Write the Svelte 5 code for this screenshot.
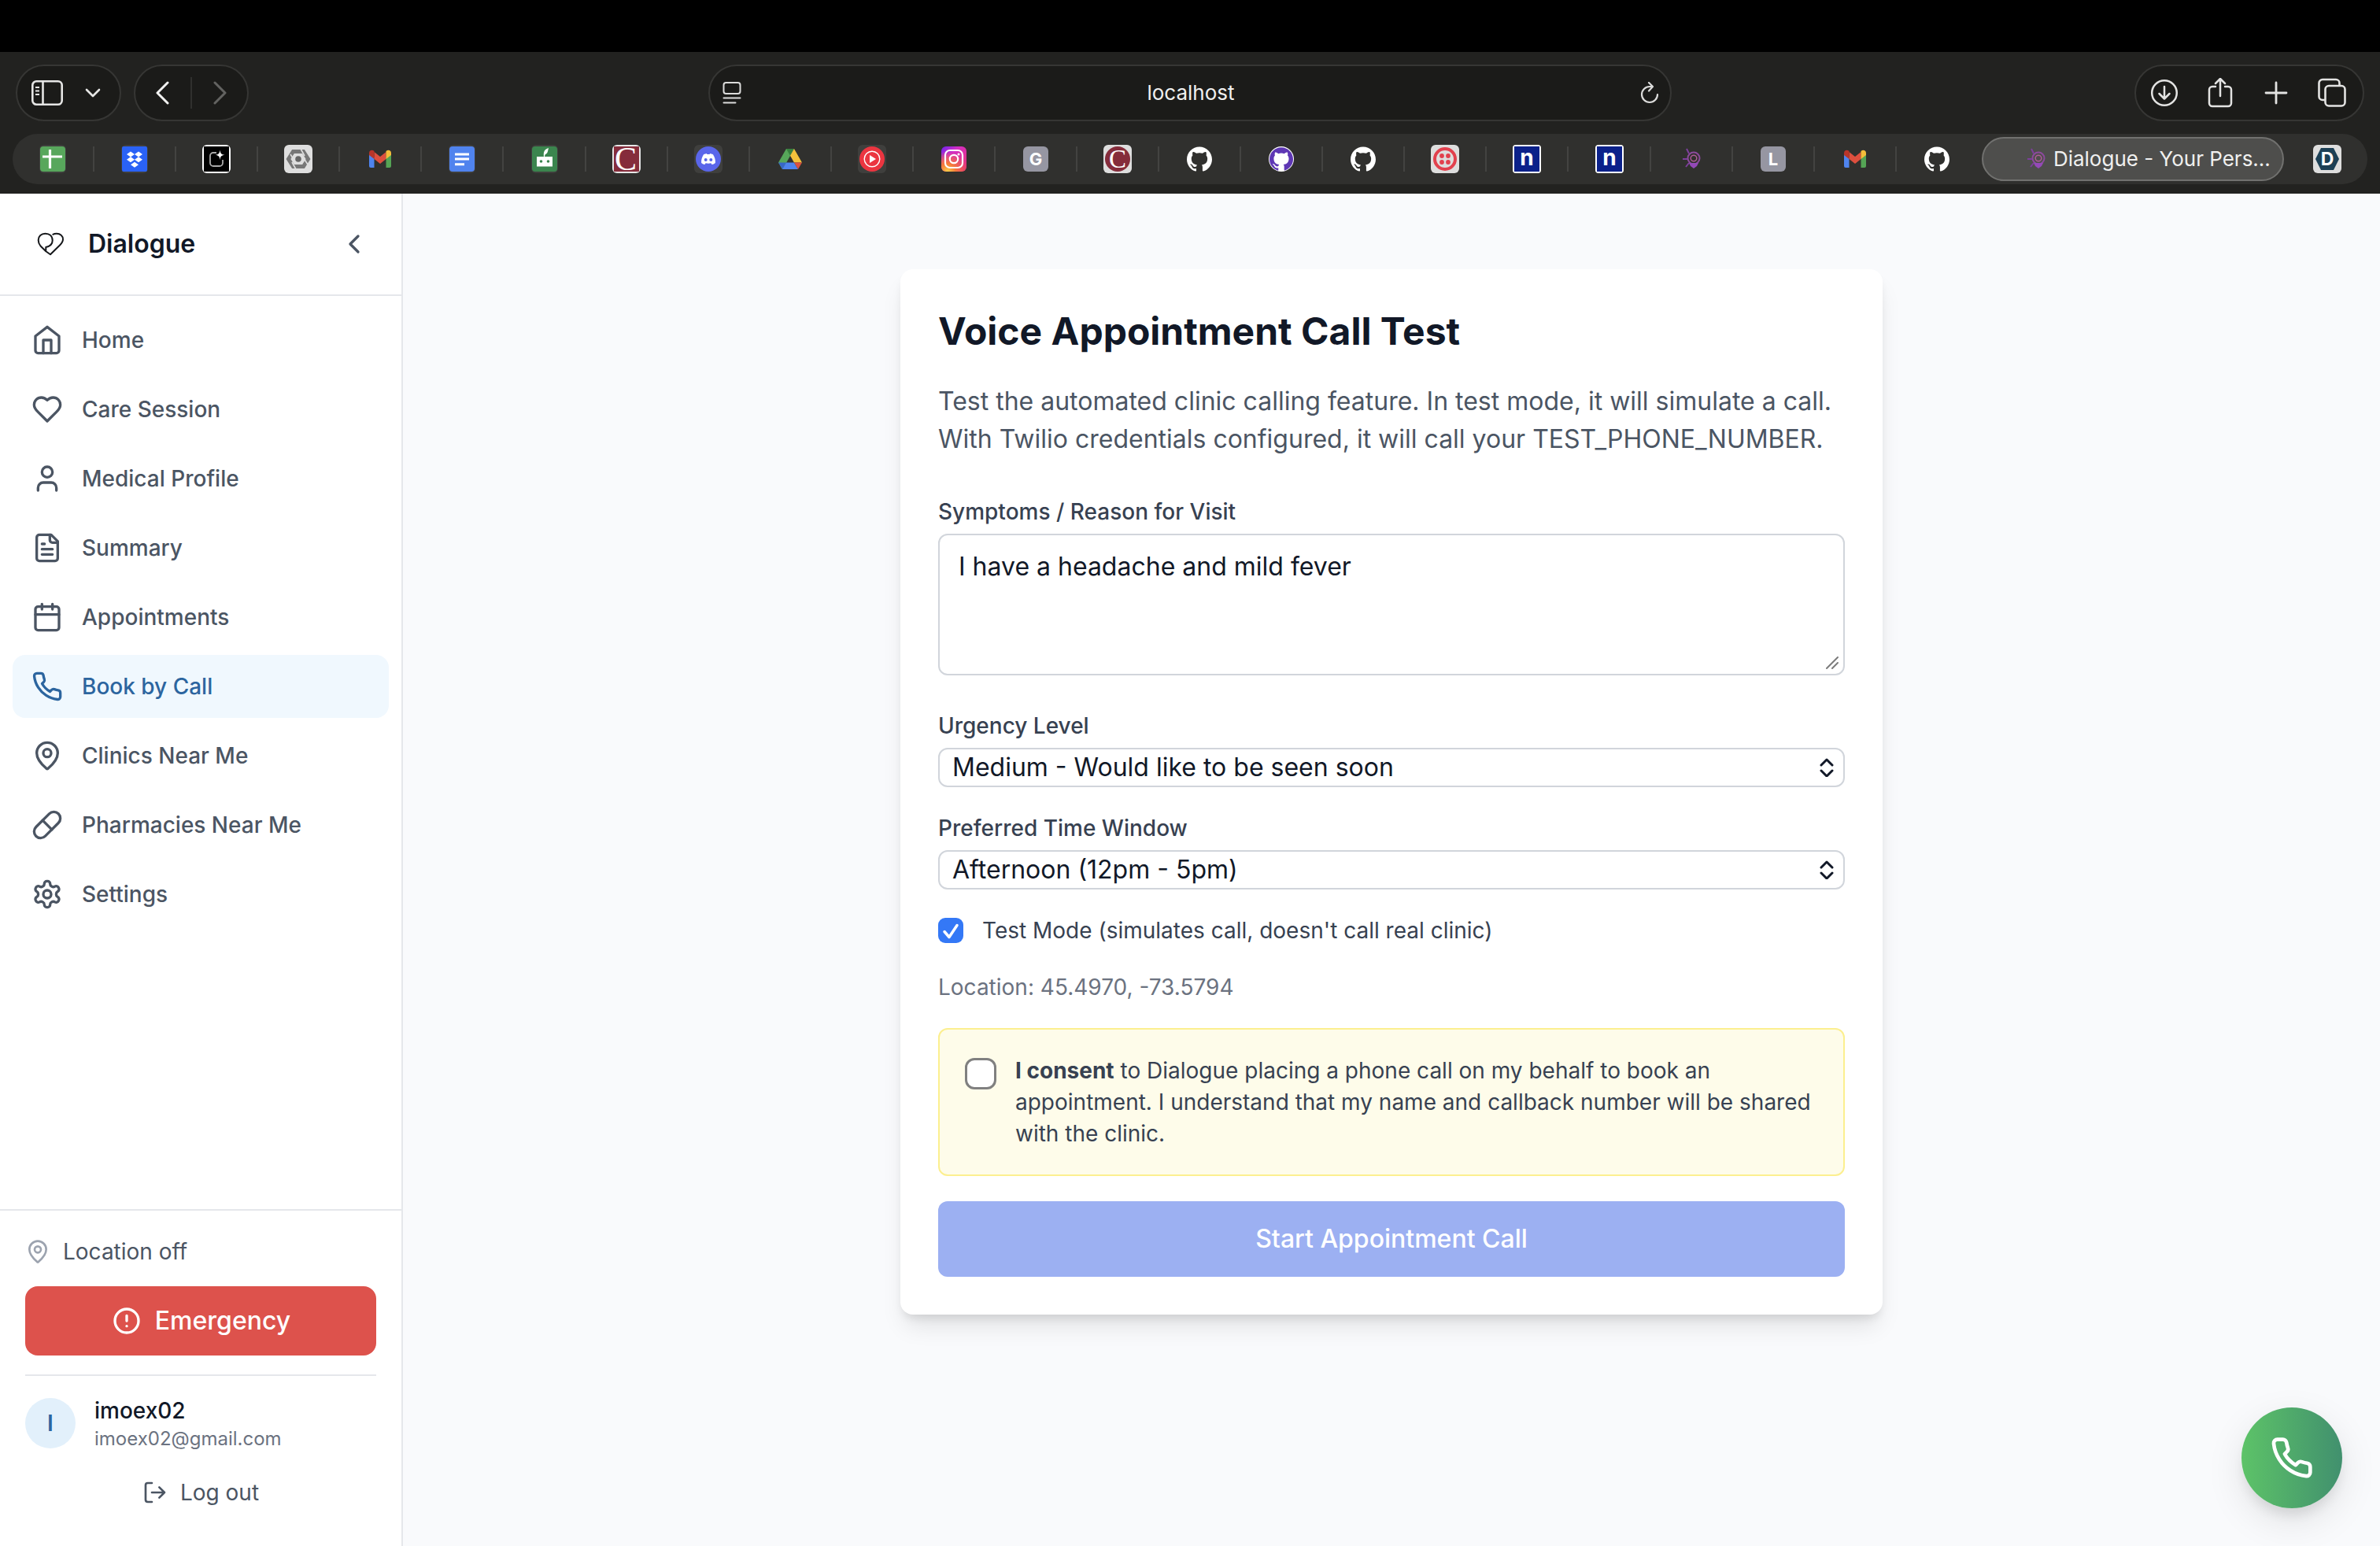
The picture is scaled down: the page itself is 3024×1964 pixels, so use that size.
<script lang="ts">
  type Tab = { kind: string; title: string; letter?: string };

  const tabs: Tab[] = [
    { kind: 'sheets', title: 'Sheets' },
    { kind: 'dropbox', title: 'Dropbox' },
    { kind: 'spark', title: 'Spark' },
    { kind: 'knot', title: 'Knot' },
    { kind: 'gmail', title: 'Gmail' },
    { kind: 'docs', title: 'Docs' },
    { kind: 'robot', title: 'Robot' },
    { kind: 'csquare', title: 'Carleton' },
    { kind: 'discord', title: 'Discord' },
    { kind: 'drive', title: 'Drive' },
    { kind: 'music', title: 'YouTube Music' },
    { kind: 'instagram', title: 'Instagram' },
    { kind: 'letter', title: 'G', letter: 'G' },
    { kind: 'cround', title: 'Carleton' },
    { kind: 'github', title: 'GitHub' },
    { kind: 'githubPurple', title: 'GitHub' },
    { kind: 'github', title: 'GitHub' },
    { kind: 'twilio', title: 'Twilio' },
    { kind: 'n', title: 'n' },
    { kind: 'n', title: 'n' },
    { kind: 'orbit', title: 'Dialogue' },
    { kind: 'letter', title: 'L', letter: 'L' },
    { kind: 'gmail', title: 'Gmail' },
    { kind: 'github', title: 'GitHub' }
  ];

  const nav = [
    { label: 'Home', icon: 'home' },
    { label: 'Care Session', icon: 'heart' },
    { label: 'Medical Profile', icon: 'user' },
    { label: 'Summary', icon: 'file' },
    { label: 'Appointments', icon: 'calendar' },
    { label: 'Book by Call', icon: 'phone', active: true },
    { label: 'Clinics Near Me', icon: 'pin' },
    { label: 'Pharmacies Near Me', icon: 'pill' },
    { label: 'Settings', icon: 'gear' }
  ];

  let symptoms = $state('I have a headache and mild fever');
  let urgency = $state('medium');
  let timeWindow = $state('afternoon');
  let testMode = $state(true);
  let consent = $state(false);

  const githubMark =
    'M12 .297c-6.63 0-12 5.373-12 12 0 5.303 3.438 9.8 8.205 11.385.6.113.82-.258.82-.577 0-.285-.01-1.04-.015-2.04-3.338.724-4.042-1.61-4.042-1.61C4.422 18.07 3.633 17.7 3.633 17.7c-1.087-.744.084-.729.084-.729 1.205.084 1.838 1.236 1.838 1.236 1.07 1.835 2.809 1.305 3.495.998.108-.776.417-1.305.76-1.605-2.665-.3-5.466-1.332-5.466-5.93 0-1.31.465-2.38 1.235-3.22-.135-.303-.54-1.523.105-3.176 0 0 1.005-.322 3.3 1.23.96-.267 1.98-.399 3-.405 1.02.006 2.04.138 3 .405 2.28-1.552 3.285-1.23 3.285-1.23.645 1.653.24 2.873.12 3.176.765.84 1.23 1.91 1.23 3.22 0 4.61-2.805 5.625-5.475 5.92.42.36.81 1.096.81 2.22 0 1.606-.015 2.896-.015 3.286 0 .315.21.69.825.57C20.565 22.092 24 17.592 24 12.297c0-6.627-5.373-12-12-12';
</script>

{#snippet favicon(kind: string, letter: string = '')}
  <svg class="favicon" viewBox="0 0 36 36" aria-hidden="true">
    {#if kind === 'sheets'}
      <rect x="1" y="0" width="34" height="36" rx="6" fill="#3f3f3d" />
      <rect x="2" y="2" width="32" height="32" rx="4" fill="#58a75c" />
      <path d="M14.500 6v24M5 15h25" stroke="#fff" stroke-width="3.200" />
    {:else if kind === 'dropbox'}
      <rect x="1" y="0" width="34" height="36" rx="6" fill="#3f3f3d" />
      <rect x="2" y="2" width="32" height="32" rx="2" fill="#2a62f6" />
      <path fill="#fff" d="M13 8.500l5 3.500-5 3.500-5-3.500zM23 8.500l5 3.500-5 3.500-5-3.500zM13 15.200l5 3.500-5 3.500-5-3.500zM23 15.200l5 3.500-5 3.500-5-3.500zM18 21.800l5 3.500-5 3.500-5-3.500z" />
    {:else if kind === 'spark'}
      <rect width="36" height="36" rx="6" fill="#fff" />
      <rect x="2" y="2" width="32" height="32" fill="#000" />
      <path d="M18 10h-4a4 4 0 0 0-4 4v9a4 4 0 0 0 4 4h8a4 4 0 0 0 4-4v-4" fill="none" stroke="#aaa" stroke-width="1.800" />
      <path d="M22.500 6.500c.6 4.500 1.500 5.600 6 6.300-4.500.8-5.400 1.900-6 6.400-.6-4.500-1.500-5.600-6-6.400 4.500-.7 5.400-1.800 6-6.300z" fill="#fff" />
    {:else if kind === 'knot'}
      <rect width="36" height="36" rx="6" fill="#dedede" />
      <path d="M11.500 8.500h13l6 9.500-6 9.500h-13l-6-9.500z" fill="none" stroke="#777" stroke-width="5" />
      <path d="M8 12l5 8M21 5l5 9M30 25l-5-8M15 31l-5-9" stroke="#dedede" stroke-width="1.600" />
      <circle cx="18" cy="18" r="3.800" fill="#666" />
    {:else if kind === 'gmail'}
      <path d="M4 11v16a2 2 0 0 0 2 2h4.500V15.500z" fill="#4f84ee" />
      <path d="M32 11v16a2 2 0 0 1-2 2h-4.500V15.500z" fill="#55a455" />
      <path d="M10.500 9v9l7.500 6 7.500-6V9L18 15z" fill="#dd4f3e" />
      <path d="M4 10.500c0-3.500 3.700-4.800 6.500-2.500v10L4 13z" fill="#b8352a" />
      <path d="M32 10.500c0-3.500-3.700-4.800-6.500-2.500v10L32 13z" fill="#f4bd3a" />
    {:else if kind === 'docs'}
      <rect x="1" y="0" width="34" height="36" rx="6" fill="#3f3f3d" />
      <rect x="2" y="2" width="32" height="32" rx="4" fill="#5083ee" />
      <path d="M9 12h18M9 18h18M9 24.800h12" stroke="#fff" stroke-width="3" />
    {:else if kind === 'robot'}
      <rect x="1" y="0" width="34" height="36" rx="6" fill="#3f3f3d" />
      <rect x="2" y="2" width="32" height="32" rx="4" fill="#3b854e" />
      <rect x="8" y="15" width="20" height="12.500" fill="#fff" />
      <path d="M17 15c-1-6 1-9.500 6-11-1 4-1 7-4.500 8.500L18 15z" fill="#fff" />
      <circle cx="13.500" cy="21" r="1.800" fill="#3b854e" />
      <circle cx="22.500" cy="21" r="1.800" fill="#3b854e" />
    {:else if kind === 'csquare'}
      <rect width="36" height="36" rx="6" fill="#e6e6e6" />
      <rect x="2" y="2" width="32" height="32" fill="#852c3b" />
      <text x="17" y="32" class="serif" font-size="42" fill="#fff">C</text>
    {:else if kind === 'discord'}
      <rect width="36" height="36" rx="6" fill="#3f3f3d" />
      <circle cx="18" cy="18" r="16" fill="#5a66ea" />
      <path d="M12 12.300c1.500-.9 3-1.300 3.800-1.400l.6 1.200h3.200l.6-1.200c.8.100 2.300.5 3.800 1.400 2 3 3.200 6.800 2.900 10.600-1.500 1.200-3 1.900-4.400 2.200l-1.100-1.900c-2.200.6-4.600.6-6.800 0l-1.100 1.900c-1.400-.3-2.900-1-4.400-2.200-.3-3.800.9-7.600 2.900-10.600z" fill="#fff" />
      <circle cx="14.700" cy="19" r="2" fill="#5a66ea" />
      <circle cx="21.300" cy="19" r="2" fill="#5a66ea" />
    {:else if kind === 'drive'}
      <path d="M13 5h10l-9.500 17L8 31 3 22.500z" fill="#57a65a" />
      <path d="M13 5h10l-5 8.700z" fill="#38803f" />
      <path d="M23 5l10 17.500h-10L18 13.700z" fill="#f3c13c" />
      <path d="M3 22.500h10L8 31z" fill="#3767c8" />
      <path d="M13 22.500h10L28 31H8z" fill="#4f84ee" />
      <path d="M23 22.500h10L28 31z" fill="#db5140" />
    {:else if kind === 'music'}
      <rect width="36" height="36" rx="6" fill="#3f3f3d" />
      <circle cx="18" cy="18" r="16" fill="#eb3540" />
      <circle cx="18" cy="18" r="9.800" fill="none" stroke="#fff" stroke-width="1.400" />
      <path d="M15 13l8 5-8 5z" fill="#fff" />
    {:else if kind === 'instagram'}
      <defs>
        <linearGradient id="insta-base" x1="0" y1="0" x2="1" y2="1">
          <stop offset="0" stop-color="#6a22f0" />
          <stop offset=".35" stop-color="#d42ec4" />
          <stop offset="1" stop-color="#e8336a" />
        </linearGradient>
        <radialGradient id="insta-glow" cx=".25" cy="1" r=".8">
          <stop offset="0" stop-color="#fcd04a" />
          <stop offset=".4" stop-color="#f5793a" />
          <stop offset="1" stop-color="#f5793a" stop-opacity="0" />
        </radialGradient>
      </defs>
      <rect x="2" y="2" width="32" height="32" rx="6" fill="url(#insta-base)" />
      <rect x="2" y="2" width="32" height="32" rx="6" fill="url(#insta-glow)" />
      <rect x="7" y="7" width="22" height="22" rx="6" fill="none" stroke="#fff" stroke-width="2.200" />
      <circle cx="18" cy="18" r="5.200" fill="none" stroke="#fff" stroke-width="2.200" />
      <circle cx="24" cy="12" r="1.500" fill="#fff" />
    {:else if kind === 'letter'}
      <rect x="2" y="2" width="32" height="32" rx="6" fill="#9696a2" />
      <text x="18" y="26" class="sans" font-size="22" fill="#fff">{letter}</text>
    {:else if kind === 'cround'}
      <rect width="36" height="36" rx="6" fill="#dedede" />
      <circle cx="18" cy="18" r="16" fill="#852c3b" />
      <text x="18" y="29" class="serif" font-size="33" fill="#fff">C</text>
    {:else if kind === 'github'}
      <path transform="translate(2 2) scale(1.333)" d={githubMark} fill="#fff" />
    {:else if kind === 'githubPurple'}
      <circle cx="18" cy="18" r="16" fill="#fff" />
      <path transform="translate(3 3) scale(1.250)" d={githubMark} fill="#5e37b4" />
    {:else if kind === 'twilio'}
      <rect width="36" height="36" rx="6" fill="#dedede" />
      <circle cx="18" cy="18" r="13" fill="none" stroke="#e2414e" stroke-width="4" />
      <g fill="#e2414e">
        <circle cx="14" cy="14" r="2.900" /><circle cx="22" cy="14" r="2.900" />
        <circle cx="14" cy="22" r="2.900" /><circle cx="22" cy="22" r="2.900" />
      </g>
    {:else if kind === 'n'}
      <rect width="36" height="36" rx="4" fill="#fff" />
      <rect x="2" y="2" width="32" height="32" fill="#0b218a" />
      <text x="18" y="26" class="sans" font-size="28" fill="#fff">n</text>
    {:else if kind === 'orbit'}
      <g fill="none" stroke="#7d3f9c" stroke-width="2">
        <circle cx="21" cy="17" r="7.500" stroke="#8c4a9c" />
        <circle cx="21" cy="17" r="3.800" stroke="#b05c98" stroke-width="1.500" />
        <path d="M7 18h6M12 5l3 6M11 28l4-5" />
      </g>
      <path d="M15 23h12l-2 4-4 3-4-3z" fill="#9449b8" />
    {:else if kind === 'd'}
      <rect width="36" height="36" rx="6" fill="#dedede" />
      <path d="M10 4h16l7 14-7 14H10L3 18z" fill="#1c4056" />
      <text x="18" y="26" class="sans" font-size="23" fill="#fff">D</text>
    {/if}
  </svg>
{/snippet}

{#snippet icon(name: string)}
  <svg class="icon" viewBox="0 0 24 24" fill="none" stroke="currentColor" stroke-width="2" stroke-linecap="round" stroke-linejoin="round" aria-hidden="true">
    {#if name === 'home'}
      <path d="M3 9l9-7 9 7v11a2 2 0 0 1-2 2H5a2 2 0 0 1-2-2z" /><path d="M9 22V12h6v10" />
    {:else if name === 'heart'}
      <path d="M19 14c1.490-1.460 3-3.210 3-5.500A5.500 5.500 0 0 0 16.500 3c-1.760 0-3 .5-4.500 2-1.500-1.500-2.740-2-4.500-2A5.500 5.500 0 0 0 2 8.500c0 2.300 1.500 4.050 3 5.500l7 7Z" />
    {:else if name === 'user'}
      <path d="M19 21v-2a4 4 0 0 0-4-4H9a4 4 0 0 0-4 4v2" /><circle cx="12" cy="7" r="4" />
    {:else if name === 'file'}
      <path d="M15 2H6a2 2 0 0 0-2 2v16a2 2 0 0 0 2 2h12a2 2 0 0 0 2-2V7Z" /><path d="M14 2v4a2 2 0 0 0 2 2h4M10 9H8M16 13H8M16 17H8" />
    {:else if name === 'calendar'}
      <path d="M8 2v4M16 2v4M3 10h18" /><rect x="3" y="4" width="18" height="18" rx="2" />
    {:else if name === 'phone'}
      <path d="M22 16.920v3a2 2 0 0 1-2.180 2 19.790 19.790 0 0 1-8.630-3.070 19.500 19.500 0 0 1-6-6 19.790 19.790 0 0 1-3.070-8.670A2 2 0 0 1 4.110 2h3a2 2 0 0 1 2 1.720 12.840 12.840 0 0 0 .7 2.810 2 2 0 0 1-.45 2.110L8.090 9.910a16 16 0 0 0 6 6l1.270-1.270a2 2 0 0 1 2.110-.45 12.840 12.840 0 0 0 2.810.7A2 2 0 0 1 22 16.920z" />
    {:else if name === 'pin'}
      <path d="M20 10c0 4.993-5.539 10.193-7.399 11.799a1 1 0 0 1-1.202 0C9.539 20.193 4 14.993 4 10a8 8 0 0 1 16 0" /><circle cx="12" cy="10" r="3" />
    {:else if name === 'pill'}
      <path d="m10.500 20.500 10-10a4.950 4.950 0 1 0-7-7l-10 10a4.950 4.950 0 1 0 7 7Z" /><path d="m8.500 8.500 7 7" />
    {:else if name === 'gear'}
      <path d="M12.220 2h-.44a2 2 0 0 0-2 2v.18a2 2 0 0 1-1 1.730l-.43.250a2 2 0 0 1-2 0l-.15-.08a2 2 0 0 0-2.730.730l-.22.380a2 2 0 0 0 .73 2.730l.15.100a2 2 0 0 1 1 1.720v.510a2 2 0 0 1-1 1.740l-.15.090a2 2 0 0 0-.73 2.730l.22.380a2 2 0 0 0 2.730.730l.15-.08a2 2 0 0 1 2 0l.43.250a2 2 0 0 1 1 1.730V20a2 2 0 0 0 2 2h.44a2 2 0 0 0 2-2v-.18a2 2 0 0 1 1-1.730l.43-.25a2 2 0 0 1 2 0l.15.080a2 2 0 0 0 2.730-.73l.22-.39a2 2 0 0 0-.73-2.730l-.15-.08a2 2 0 0 1-1-1.740v-.5a2 2 0 0 1 1-1.740l.15-.09a2 2 0 0 0 .73-2.730l-.22-.38a2 2 0 0 0-2.730-.73l-.15.080a2 2 0 0 1-2 0l-.43-.25a2 2 0 0 1-1-1.730V4a2 2 0 0 0-2-2z" /><circle cx="12" cy="12" r="3" />
    {:else if name === 'chevron'}
      <path d="m15 18-6-6 6-6" />
    {:else if name === 'alert'}
      <circle cx="12" cy="12" r="9" /><path d="M12 8v4M12 16h.010" />
    {:else if name === 'logout'}
      <path d="M9 21H5a2 2 0 0 1-2-2V5a2 2 0 0 1 2-2h4M16 17l5-5-5-5M21 12H9" />
    {/if}
  </svg>
{/snippet}

{#snippet sortArrows()}
  <svg class="arrows" viewBox="0 0 18 24" fill="none" stroke="#111827" stroke-width="3" stroke-linecap="round" stroke-linejoin="round" aria-hidden="true">
    <path d="M2 9l7-7 7 7M2 16l7 7 7-7" />
  </svg>
{/snippet}

<div class="screen">
  <div class="notch"></div>
  <header class="chrome">
    <div class="toolbar">
      <div class="group">
        <div class="capsule panel">
          <button aria-label="Sidebar">
            <svg class="tool" viewBox="0 0 40 32" fill="none" stroke="#e6e6e5" stroke-width="2.600">
              <rect x="1.300" y="1.300" width="37.400" height="29.400" rx="5" /><path d="M14.500 1v30" /><path d="M5 9h5M5 13.500h5M5 18h5" stroke-width="2" />
            </svg>
          </button>
          <button aria-label="Tab groups">
            <svg class="caret" viewBox="0 0 20 12" fill="none" stroke="#e6e6e5" stroke-width="2.600" stroke-linecap="round" stroke-linejoin="round"><path d="M2 2l8 8 8-8" /></svg>
          </button>
        </div>
        <div class="capsule history">
          <button aria-label="Back">
            <svg class="arrow" viewBox="0 0 18 30" fill="none" stroke="#f2f2f1" stroke-width="3" stroke-linecap="round" stroke-linejoin="round"><path d="M15 2L2 15l13 13" /></svg>
          </button>
          <span class="bar"></span>
          <button aria-label="Forward">
            <svg class="arrow" viewBox="0 0 18 30" fill="none" stroke="#636361" stroke-width="3" stroke-linecap="round" stroke-linejoin="round"><path d="M3 2l13 13L3 28" /></svg>
          </button>
        </div>
      </div>
      <div class="capsule address">
        <svg class="reader" viewBox="0 0 24 28" fill="none" stroke="#dcdcdb" stroke-width="2" stroke-linecap="round"><rect x="1.500" y="1" width="21" height="14" rx="3" /><path d="M1.500 20.500h21M1.500 26.500h15" /></svg>
        <span>localhost</span>
        <button aria-label="Reload">
          <svg class="reload" viewBox="0 0 24 28" fill="none" stroke="#dcdcdb" stroke-width="2.200" stroke-linecap="round" stroke-linejoin="round"><path d="M22 16a10 10 0 1 1-10-10h3" /><path d="M11 1l5 5-5 5.500" /></svg>
        </button>
      </div>
      <div class="group end">
        <div class="capsule actions">
          <button aria-label="Downloads">
            <svg class="act" viewBox="0 0 38 38" fill="none" stroke="#e3e3e2" stroke-width="2.500" stroke-linecap="round" stroke-linejoin="round"><circle cx="19" cy="19" r="15.800" /><path d="M19 11v15M12.500 20l6.500 6.500 6.500-6.500" /></svg>
          </button>
          <button aria-label="Share">
            <svg class="act" viewBox="0 0 38 38" fill="none" stroke="#e3e3e2" stroke-width="2.500" stroke-linecap="round" stroke-linejoin="round"><path d="M13 11H9a4 4 0 0 0-4 4v17a4 4 0 0 0 4 4h20a4 4 0 0 0 4-4V15a4 4 0 0 0-4-4h-4" /><path d="M19 23V1.500M13 7l6-6 6 6" /></svg>
          </button>
          <button aria-label="New tab">
            <svg class="act" viewBox="0 0 38 38" fill="none" stroke="#e3e3e2" stroke-width="2.800" stroke-linecap="round"><path d="M19 6v26M6 19h26" /></svg>
          </button>
          <button aria-label="Tab overview">
            <svg class="act" viewBox="0 0 38 38" fill="none" stroke="#e3e3e2" stroke-width="2.600" stroke-linejoin="round"><rect x="10.500" y="10" width="25" height="25.500" rx="4.500" /><path d="M10 28H7a4.500 4.500 0 0 1-4.500-4.500V6.500A4.500 4.500 0 0 1 7 2h17a4.500 4.500 0 0 1 4.500 4.500V10" /></svg>
          </button>
        </div>
      </div>
    </div>
    <div class="tabs">
      {#each tabs as tab}
        <button class="tab" aria-label={tab.title}>{@render favicon(tab.kind, tab.letter)}</button>
      {/each}
      <button class="tab current">
        {@render favicon('orbit')}
        <span>Dialogue - Your Pers...</span>
      </button>
      <button class="tab" aria-label="D">{@render favicon('d')}</button>
    </div>
  </header>

  <div class="app">
    <aside>
      <div class="brand">
        <svg class="logo" viewBox="0 0 64 64" fill="none" stroke="#15171a" stroke-width="2" stroke-linecap="round" stroke-linejoin="round" aria-hidden="true">
          <path d="M26.300 41.300L19.500 34.500C17.500 32 16.700 30 16.700 27c0-5 3.800-8.300 8.800-8.300 5.500 0 9.200 3.300 9.200 8.800 0 4.500-3.700 7.500-8.400 8.500v5.300L32 45.300l12-11.800c2.500-2.500 4-4.500 4-7.500 0-4.500-3.500-7.300-8-7.300-2 0-3.500.3-4.700 1.100" />
        </svg>
        <strong>Dialogue</strong>
        <button class="collapse" aria-label="Collapse sidebar">{@render icon('chevron')}</button>
      </div>
      <nav>
        {#each nav as item}
          <a href="#{item.icon}" class:active={item.active}>{@render icon(item.icon)}<span>{item.label}</span></a>
        {/each}
      </nav>
      <div class="foot">
        <div class="location">{@render icon('pin')}<span>Location off</span></div>
        <button class="emergency">{@render icon('alert')}<span>Emergency</span></button>
        <div class="account">
          <span class="avatar">I</span>
          <div class="who">
            <span class="name">imoex02</span>
            <span class="mail">imoex02@gmail.com</span>
          </div>
        </div>
        <button class="logout">{@render icon('logout')}<span>Log out</span></button>
      </div>
    </aside>

    <main>
      <form class="card">
        <h1>Voice Appointment Call Test</h1>
        <p class="intro">Test the automated clinic calling feature. In test mode, it will simulate a call. With Twilio credentials configured, it will call your TEST_PHONE_NUMBER.</p>

        <div class="field tall">
          <label for="symptoms">Symptoms / Reason for Visit</label>
          <div class="stack">
            <textarea id="symptoms" rows="3" bind:value={symptoms}></textarea>
            <svg class="grip" viewBox="0 0 16 16" stroke="#7c7c7c" stroke-width="2" stroke-linecap="round" aria-hidden="true"><path d="M1 15L15 1M8 15l7-7" /></svg>
          </div>
        </div>
        <div class="field">
          <label for="urgency">Urgency Level</label>
          <div class="stack">
            <select id="urgency" bind:value={urgency}>
              <option value="medium">Medium - Would like to be seen soon</option>
            </select>
            {@render sortArrows()}
          </div>
        </div>
        <div class="field">
          <label for="window">Preferred Time Window</label>
          <div class="stack">
            <select id="window" bind:value={timeWindow}>
              <option value="afternoon">Afternoon (12pm - 5pm)</option>
            </select>
            {@render sortArrows()}
          </div>
        </div>
        <div class="check">
          <span class="stack">
            <input id="test-mode" type="checkbox" class="filled" bind:checked={testMode} />
            {#if testMode}
              <svg class="mark" viewBox="0 0 32 32" fill="none" stroke="#fff" stroke-width="3.500" stroke-linecap="round" stroke-linejoin="round" aria-hidden="true"><path d="M8 17.500l6 7L24 9.500" /></svg>
            {/if}
          </span>
          <label for="test-mode">Test Mode (simulates call, doesn't call real clinic)</label>
        </div>
        <p class="coords">Location: 45.4970, -73.5794</p>
        <div class="consent">
          <input id="consent" type="checkbox" bind:checked={consent} />
          <label for="consent"><b>I consent</b> to Dialogue placing a phone call on my behalf to book an appointment. I understand that my name and callback number will be shared with the clinic.</label>
        </div>
        <button class="start" type="button" disabled={!consent}>Start Appointment Call</button>
      </form>
    </main>
  </div>
  <button class="fab" aria-label="Call">{@render icon('phone')}</button>
</div>

<style>
  :global(body) {
    margin: 0;
    background: #f9fafc;
  }
  .screen,
  .screen * {
    box-sizing: border-box;
  }
  .screen {
    display: flex;
    flex-direction: column;
    min-height: 100vh;
    font-family: Inter, 'Liberation Sans', sans-serif;
    font-size: 28px;
    line-height: 40px;
    color: #111827;
  }
  button {
    font: inherit;
    color: inherit;
    border: 0;
    padding: 0;
    background: none;
    display: flex;
    align-items: center;
    justify-content: center;
  }
  svg {
    display: block;
    flex: none;
  }

  .notch {
    height: 66px;
    background: #000;
  }
  .chrome {
    background: #222220;
    padding: 16px 16px 12px;
    color: #f0f0ef;
    font-size: 26px;
  }
  .toolbar {
    display: grid;
    grid-template-columns: 1fr minmax(0, 1224px) 1fr;
    padding: 0 4px;
  }
  .group {
    display: flex;
    gap: 16px;
  }
  .end {
    justify-content: flex-end;
  }
  .capsule {
    height: 72px;
    border: 2px solid #363634;
    border-radius: 36px;
    background: #1b1b19;
    display: flex;
    align-items: center;
  }
  .panel {
    width: 134px;
    padding: 0 24px 0 18px;
    justify-content: space-between;
  }
  .tool {
    width: 40px;
    height: 32px;
  }
  .caret {
    width: 20px;
    height: 12px;
  }
  .history {
    width: 146px;
    padding: 0 26px;
    justify-content: space-between;
  }
  .arrow {
    width: 18px;
    height: 30px;
  }
  .bar {
    width: 2px;
    height: 40px;
    background: #30302e;
  }
  .address {
    justify-content: space-between;
    padding: 0 14px 0 16px;
  }
  .reader,
  .reload {
    width: 24px;
    height: 28px;
  }
  .actions {
    width: 292px;
    padding-right: 4px;
  }
  .actions button {
    flex: 1;
  }
  .act {
    width: 38px;
    height: 38px;
  }
  .tabs {
    display: flex;
    align-items: center;
    height: 64px;
    margin-top: 16px;
    border-radius: 32px;
    background: #30302e;
  }
  .tab {
    flex: 1 1 0;
    min-width: 0;
    height: 32px;
    border-right: 2px solid #434341;
  }
  .tab:nth-last-child(-n + 3) {
    border-right-color: transparent;
  }
  .tab:last-child {
    border-right: 0;
  }
  .favicon {
    width: 36px;
    height: 36px;
    overflow: visible;
  }
  .favicon text {
    text-anchor: middle;
  }
  .serif {
    font-family: 'Liberation Serif', serif;
  }
  .sans {
    font-family: Inter, sans-serif;
    font-weight: 700;
  }
  .tab.current {
    flex: 0 0 384px;
    height: 56px;
    margin: 0 4px;
    padding-left: 34px;
    gap: 4px;
    border: 2px solid #71716f;
    border-radius: 28px;
    background: #4e4e4c;
    white-space: nowrap;
  }

  .app {
    flex: 1;
    display: flex;
  }
  aside {
    flex: none;
    width: 512px;
    display: flex;
    flex-direction: column;
    background: #fff;
    border-right: 2px solid #e5e7eb;
    color: #4b5563;
  }
  .icon {
    width: 40px;
    height: 40px;
  }
  .brand {
    display: flex;
    align-items: center;
    height: 130px;
    padding: 0 32px;
    gap: 16px;
    border-bottom: 2px solid #e5e7eb;
  }
  .logo {
    width: 64px;
    height: 64px;
  }
  .brand strong {
    flex: 1;
    font-size: 32px;
    font-weight: 600;
    color: #111827;
  }
  .collapse {
    padding: 8px;
  }
  nav {
    display: flex;
    flex-direction: column;
    gap: 8px;
    padding: 16px;
  }
  nav a {
    display: flex;
    align-items: center;
    gap: 24px;
    height: 80px;
    padding: 0 24px;
    border-radius: 16px;
    color: inherit;
    font-weight: 500;
    text-decoration: none;
  }
  nav a.active {
    background: #f0f8fe;
    color: #2c659f;
  }
  .foot {
    margin-top: auto;
    padding: 24px 32px 32px;
    border-top: 2px solid #e5e7eb;
  }
  .location {
    display: flex;
    align-items: center;
    gap: 16px;
    height: 56px;
    margin-bottom: 16px;
  }
  .location .icon {
    width: 32px;
    height: 32px;
    color: #9ca3af;
  }
  .emergency {
    width: 100%;
    height: 88px;
    gap: 16px;
    margin-bottom: 24px;
    border-radius: 16px;
    background: #dd524c;
    color: #fff;
    font-size: 32px;
    font-weight: 500;
  }
  .account {
    display: flex;
    align-items: center;
    gap: 24px;
    padding-top: 24px;
    border-top: 2px solid #e5e7eb;
  }
  .avatar {
    display: flex;
    align-items: center;
    justify-content: center;
    width: 64px;
    height: 64px;
    border-radius: 50%;
    background: #e2f0fb;
    color: #2c659f;
    font-weight: 600;
  }
  .who {
    display: flex;
    flex-direction: column;
  }
  .name {
    color: #111827;
    font-weight: 500;
  }
  .mail {
    color: #6b7280;
    font-size: 24px;
    line-height: 32px;
  }
  .logout {
    width: 100%;
    height: 72px;
    gap: 16px;
    margin-top: 16px;
  }
  .logout .icon {
    width: 32px;
    height: 32px;
  }

  main {
    flex: 1;
    min-width: 0;
    padding: 96px 48px;
    background: #f9fafc;
  }
  .card {
    max-width: 1248px;
    margin: 0 auto;
    padding: 48px;
    border-radius: 16px;
    background: #fff;
    box-shadow:
      0 20px 30px -6px rgba(0, 0, 0, 0.1),
      0 8px 12px -4px rgba(0, 0, 0, 0.1);
    color: #374151;
  }
  h1 {
    margin: 0 0 34px;
    font-size: 48px;
    line-height: 62px;
    font-weight: 700;
    color: #111827;
  }
  .intro {
    margin: 0 0 48px;
    font-size: 32px;
    line-height: 48px;
    color: #4b5563;
  }
  .field {
    display: flex;
    flex-direction: column;
    gap: 8px;
    margin-bottom: 32px;
  }
  .tall {
    margin-bottom: 44px;
  }
  .field label {
    font-weight: 500;
  }
  .stack {
    display: grid;
  }
  .stack > * {
    grid-area: 1 / 1;
  }
  .stack > svg {
    pointer-events: none;
  }
  textarea,
  select {
    width: 100%;
    margin: 0;
    border: 2px solid #d1d5db;
    border-radius: 12px;
    background: #fff;
    color: #111827;
    font: inherit;
    font-size: 32px;
  }
  textarea {
    display: block;
    padding: 16px 24px;
    line-height: 48px;
    resize: none;
    overflow: hidden;
  }
  select {
    appearance: none;
    height: 50px;
    padding: 0 48px 0 16px;
    line-height: 44px;
  }
  .grip {
    width: 16px;
    height: 16px;
    margin: 8px;
    place-self: end;
  }
  .arrows {
    width: 18px;
    height: 24px;
    margin-right: 14px;
    place-self: center end;
  }
  .check {
    display: flex;
    align-items: center;
    gap: 24px;
    margin-bottom: 32px;
  }
  input {
    appearance: none;
    flex: none;
    width: 40px;
    height: 40px;
    margin: 4px 0 0;
    border: 3px solid #808080;
    border-radius: 12px;
    background: #fff;
  }
  input.filled {
    width: 32px;
    height: 32px;
    margin: 0;
    border-radius: 9px;
  }
  input.filled:checked {
    border: 0;
    background: #3478f6;
  }
  .mark {
    width: 32px;
    height: 32px;
  }
  .coords {
    margin: 0 0 32px;
    color: #6b7280;
  }
  .consent {
    display: flex;
    align-items: flex-start;
    gap: 24px;
    margin-bottom: 32px;
    padding: 32px;
    border: 2px solid #fcef8f;
    border-radius: 12px;
    background: #fefcea;
  }
  .consent b {
    font-weight: 700;
  }
  .start {
    width: 100%;
    height: 96px;
    border-radius: 12px;
    background: #3b63e6;
    color: #fff;
    font-size: 32px;
    font-weight: 500;
  }
  .start:disabled {
    background: #9cb0f2;
  }
  .fab {
    position: fixed;
    right: 48px;
    bottom: 48px;
    width: 128px;
    height: 128px;
    border-radius: 50%;
    background: linear-gradient(to right, #5dc368, #41906e);
    box-shadow:
      0 16px 48px rgba(0, 0, 0, 0.1),
      0 12px 20px -6px rgba(0, 0, 0, 0.12);
    color: #fff;
  }
  .fab .icon {
    width: 56px;
    height: 56px;
  }
</style>
